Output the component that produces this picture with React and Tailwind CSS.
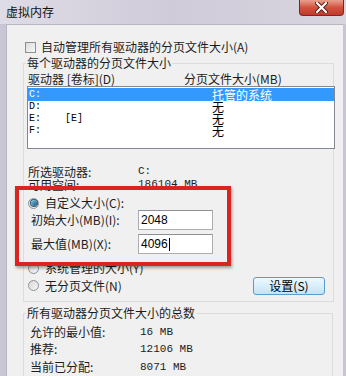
import React from 'react'

const CJK = "font-['Noto_Sans_CJK_SC',sans-serif]"

const drives = [
  { name: 'C:', label: '', size: '托管的系统', selected: true },
  { name: 'D:', label: '', size: '无' },
  { name: 'E:', label: '[E]', size: '无' },
  { name: 'F:', label: '', size: '无' },
]

function Radio({ checked }) {
  return (
    <span className="relative flex h-[11px] w-[11px] items-center justify-center rounded-full border border-[#8f9094] bg-gradient-to-br from-[#d8d8d8] to-[#f6f6f6]">
      {checked && (
        <span className="h-[6px] w-[6px] rounded-full bg-gradient-to-br from-[#7dd3e8] to-[#1a4f73] ring-1 ring-[#2e5e7a]" />
      )}
    </span>
  )
}

function Field({ value, cursor }) {
  return (
    <div className="flex h-[20px] w-[75px] items-center border border-[#abadb3] border-t-[#8e9096] bg-white pl-[2px] font-['Liberation_Sans',sans-serif] text-[12px] text-black">
      {value}
      {cursor && <span className="ml-[1px] h-[13px] w-[1px] bg-black" />}
    </div>
  )
}

function InfoRow({ label, value, h = 'h-[13px]', className = '' }) {
  return (
    <div className={`flex items-center ${h} ${className}`}>
      <span className="w-[110px]">{label}</span>
      <span className="font-['Liberation_Mono',monospace] text-[11px]">{value}</span>
    </div>
  )
}

export default function App() {
  return (
    <div className={`flex h-[376px] w-[346px] flex-col overflow-hidden bg-[#c9c5d4] ${CJK} text-[12px] leading-none text-[#1c1c1c]`}>
      {/* Title bar */}
      <div className="relative flex h-[24px] shrink-0 items-center bg-gradient-to-r from-[#dedce6] via-[#cfcbd9] to-[#d8d5df] pl-[6px]">
        <span className="text-[12px] text-[#111]">虚拟内存</span>
        <div className="absolute right-[2px] top-0 flex h-[16px] w-[45px] items-center justify-center rounded-b-[4px] border border-t-0 border-[#7a2a22] bg-gradient-to-b from-[#e8a08f] via-[#d1523e] to-[#c0392b]">
          <svg width="13" height="11" viewBox="0 0 13 11">
            <path d="M2 1 L11 10 M11 1 L2 10" stroke="#5a1a12" strokeWidth="4" strokeLinecap="round" />
            <path d="M2 1 L11 10 M11 1 L2 10" stroke="#ffffff" strokeWidth="2.2" strokeLinecap="round" />
          </svg>
        </div>
      </div>

      {/* Dialog body */}
      <div className="relative ml-[6px] mr-[3px] flex-1 border-l border-t border-[#b8b6c0] bg-[#f0f0f0] pt-[15px]">
        {/* Auto manage checkbox */}
        <div className="ml-[18px] flex h-[14px] items-center gap-[5px]">
          <span className="h-[11px] w-[11px] border border-[#8e8f8f] bg-gradient-to-br from-[#dcdcdc] to-[#f7f7f7]" />
          <span>自动管理所有驱动器的分页文件大小(A)</span>
        </div>

        {/* Per-drive group */}
        <div className="relative ml-[16px] mt-[9px] w-[311px] border border-[#dcdcdc] px-[0px] pb-[6px]">
          <span className="absolute left-[2px] top-[-7px] bg-[#f0f0f0] px-[1px]">每个驱动器的分页文件大小</span>

          <div className="mt-[8px] flex h-[14px] items-center pl-[4px]">
            <span className="w-[156px]">驱动器 [卷标](D)</span>
            <span>分页文件大小(MB)</span>
          </div>

          <div className="ml-[3px] h-[63px] w-[308px] border border-[#828790] bg-white pt-[1px]">
            {drives.map((d) => (
              <div
                key={d.name}
                className={`mx-[0px] flex h-[12px] items-center ${d.selected ? 'h-[13px] bg-[#3399ff] text-white' : 'text-black'}`}
              >
                <span className="w-[184px] pl-[1px] font-['Liberation_Mono',monospace] text-[10px]">
                  {d.name}
                  {d.label && <span className="ml-[24px]">{d.label}</span>}
                </span>
                <span>{d.size}</span>
              </div>
            ))}
          </div>

          <InfoRow className="mt-[16px] pl-[4px]" label="所选驱动器:" value="C:" />
          <InfoRow className="pl-[4px]" label="可用空间:" value="186104 MB" />

          <div className="ml-[4px] mt-[5px] flex h-[14px] items-center gap-[6px]">
            <Radio checked />
            <span>自定义大小(C):</span>
          </div>
          <div className="flex h-[20px] items-center pl-[7px]">
            <span className="w-[107px]">初始大小(MB)(I):</span>
            <Field value="2048" />
          </div>
          <div className="mt-[4px] flex h-[20px] items-center pl-[7px]">
            <span className="w-[107px]">最大值(MB)(X):</span>
            <Field value="4096" cursor />
          </div>
          <div className="ml-[4px] mt-[7px] flex h-[14px] items-center gap-[6px]">
            <Radio />
            <span>系统管理的大小(Y)</span>
          </div>
          <div className="mt-[1px] flex h-[19px] items-center pl-[4px]">
            <Radio />
            <span className="ml-[6px]">无分页文件(N)</span>
            <button className="ml-auto mr-[8px] flex h-[18px] w-[72px] items-center justify-center rounded-[3px] border border-[#5d9bc9] bg-gradient-to-b from-[#eef8fe] via-[#d9effc] to-[#bfe4f9] text-[12px] text-black">
              设置(S)
            </button>
          </div>
        </div>

        {/* Totals group */}
        <div className="relative ml-[16px] mt-[11px] w-[310px] border border-[#dcdcdc] pb-[10px] pl-[6px] pt-[11px]">
          <span className="absolute left-[2px] top-[-7px] bg-[#f0f0f0] px-[1px]">所有驱动器分页文件大小的总数</span>
          <InfoRow h="h-[14px]" label="允许的最小值:" value="16 MB" />
          <InfoRow h="h-[14px]" className="mt-[3px]" label="推荐:" value="12106 MB" />
          <InfoRow h="h-[14px]" className="mt-[4px]" label="当前已分配:" value="8071 MB" />
        </div>

        {/* Red highlight box */}
        <div className="pointer-events-none absolute left-[8px] top-[161px] h-[80px] w-[216px] border-[4px] border-[#db2420] shadow-[1px_2px_3px_rgba(0,0,0,0.35)]" />
      </div>
    </div>
  )
}
